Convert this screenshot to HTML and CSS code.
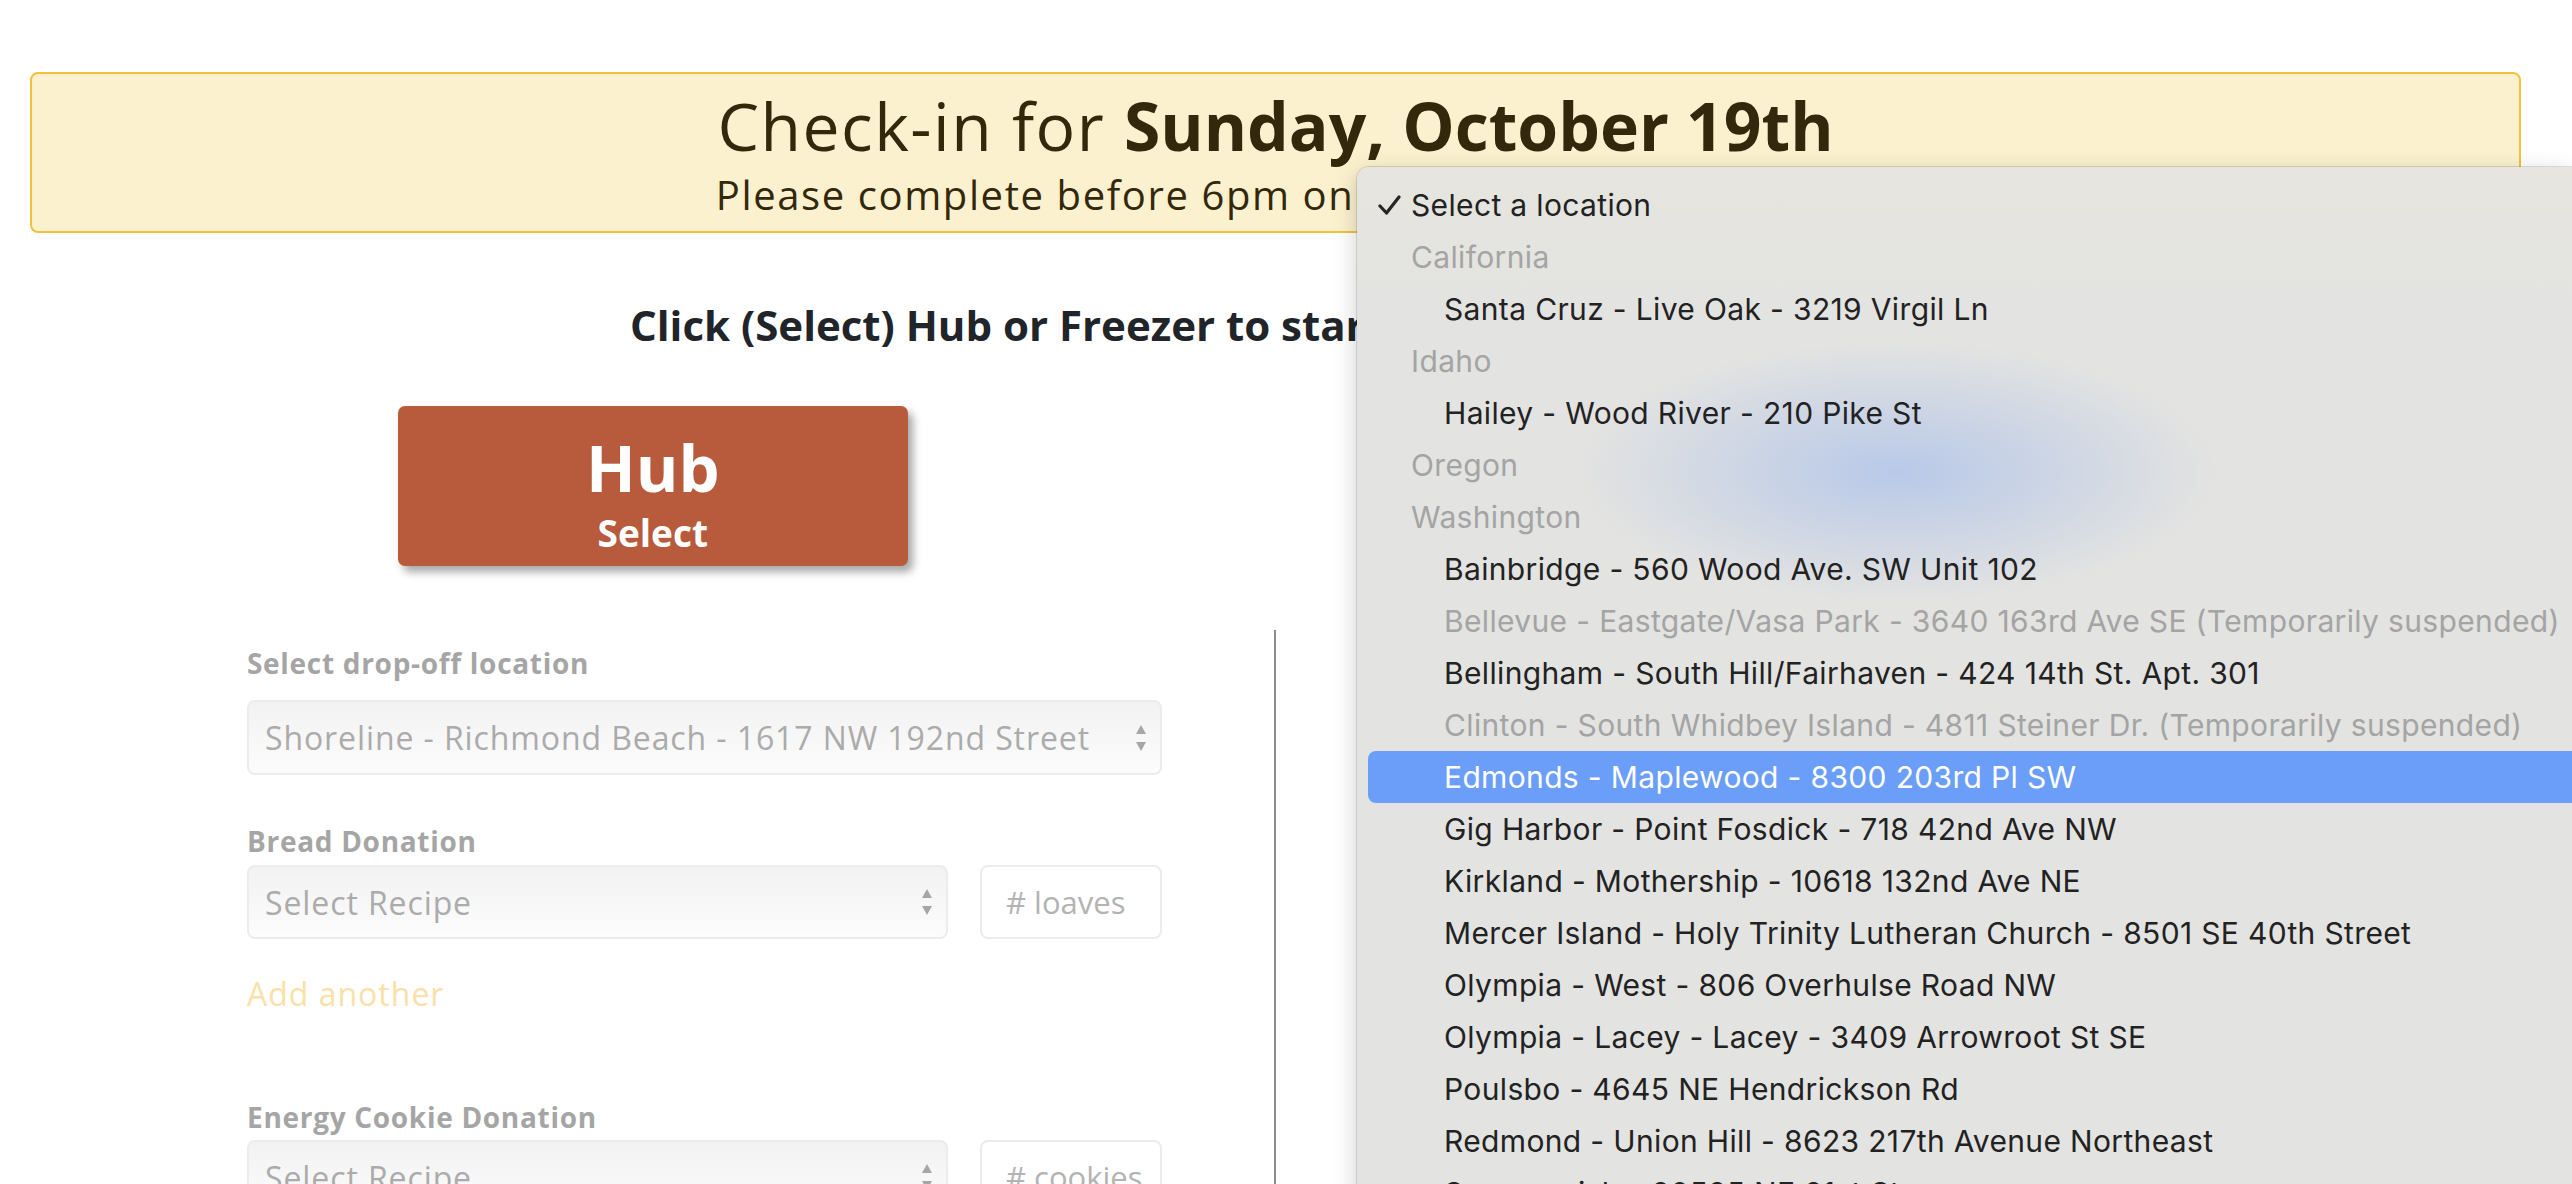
FILE: index.html
```html
<!DOCTYPE html>
<html lang="en">
<head>
    <meta charset="UTF-8">
    <meta name="viewport" content="width=device-width, initial-scale=1.0">
    <title>Check-in</title>
    <link rel="stylesheet" href="styles.css">
</head>
<body>

<div class="page">
  <div class="banner">
    <h1>Check-in for <strong>Sunday, October 19th</strong></h1>
    <p>Please complete before 6pm on Saturday, October 18th</p>
  </div>

  <h2 class="start-title">Click (Select) Hub or Freezer to start</h2>

  <div class="type-row">
    <div class="type-col">
      <button class="type-btn">
        <span class="type-name">Hub</span>
        <span class="type-action">Select</span>
      </button>
    </div>
    <div class="type-col"></div>
  </div>

  <div class="form-row">
    <div class="form-col">
      <label class="field-label">Select drop-off location</label>
      <div class="select-box">
        <span>Shoreline - Richmond Beach - 1617 NW 192nd Street</span>
        <svg class="arrows" width="10" height="28" viewBox="0 0 10 28"><polygon points="0,10 5,1 10,10"/><polygon points="0,18 5,27 10,18"/></svg>
      </div>

      <label class="field-label gap-top">Bread Donation</label>
      <div class="donation-row">
        <div class="select-box recipe">
          <span>Select Recipe</span>
          <svg class="arrows" width="10" height="28" viewBox="0 0 10 28"><polygon points="0,10 5,1 10,10"/><polygon points="0,18 5,27 10,18"/></svg>
        </div>
        <div class="count-box">#&nbsp;loaves</div>
      </div>
      <a class="add-link">Add another</a>

      <label class="field-label gap-big">Energy Cookie Donation</label>
      <div class="donation-row">
        <div class="select-box recipe">
          <span>Select Recipe</span>
          <svg class="arrows" width="10" height="28" viewBox="0 0 10 28"><polygon points="0,10 5,1 10,10"/><polygon points="0,18 5,27 10,18"/></svg>
        </div>
        <div class="count-box">#&nbsp;cookies</div>
      </div>
    </div>
    <div class="form-col right"></div>
  </div>
</div>

<!-- native select popup, open over the page -->
<div class="menu">
  <div class="menu-item checked">
    <svg class="check" width="23" height="20" viewBox="0 0 23 20"><polyline points="2,11 8.5,18 21,2"/></svg>
    Select a location
  </div>
  <div class="menu-group">California</div>
  <div class="menu-item">Santa Cruz - Live Oak - 3219 Virgil Ln</div>
  <div class="menu-group">Idaho</div>
  <div class="menu-item">Hailey - Wood River - 210 Pike St</div>
  <div class="menu-group">Oregon</div>
  <div class="menu-group">Washington</div>
  <div class="menu-item">Bainbridge - 560 Wood Ave. SW Unit 102</div>
  <div class="menu-item disabled">Bellevue - Eastgate/Vasa Park - 3640 163rd Ave SE (Temporarily suspended)</div>
  <div class="menu-item">Bellingham - South Hill/Fairhaven - 424 14th St. Apt. 301</div>
  <div class="menu-item disabled">Clinton - South Whidbey Island - 4811 Steiner Dr. (Temporarily suspended)</div>
  <div class="menu-item active">Edmonds - Maplewood - 8300 203rd Pl SW</div>
  <div class="menu-item">Gig Harbor - Point Fosdick - 718 42nd Ave NW</div>
  <div class="menu-item">Kirkland - Mothership - 10618 132nd Ave NE</div>
  <div class="menu-item">Mercer Island - Holy Trinity Lutheran Church - 8501 SE 40th Street</div>
  <div class="menu-item">Olympia - West - 806 Overhulse Road NW</div>
  <div class="menu-item">Olympia - Lacey - Lacey - 3409 Arrowroot St SE</div>
  <div class="menu-item">Poulsbo - 4645 NE Hendrickson Rd</div>
  <div class="menu-item">Redmond - Union Hill - 8623 217th Avenue Northeast</div>
  <div class="menu-item">Sammamish - 20525 NE 21st St</div>
</div>

</body>
</html>
```

FILE: styles.css
```css
body {
    margin: 0;
    font-family: "Open Sans", Arial, sans-serif;
    background: #fff;
    overflow: hidden;
    height: 1184px;
}
.page {
    width: 2491px;
    padding-top: 72px;
    margin-left: 30px;
}
.banner {
    box-sizing: border-box;
    height: 161px;
    border: 2px solid #f2c13c;
    border-radius: 8px;
    background: #fcf1cf;
    color: #33280c;
    text-align: center;
    padding-top: 11px;
}
.banner h1 {
    margin: 0;
    font-size: 66px;
    font-weight: 400;
    line-height: 80px;
    letter-spacing: 1.5px;
}
.banner h1 strong {
    font-weight: 700;
    letter-spacing: 0;
}
.banner p {
    margin: 6px 0 0;
    font-size: 40px;
    line-height: 48px;
    letter-spacing: 1.6px;
}
.start-title {
    margin: 67px 0 0;
    padding-left: 600px;
    font-size: 42px;
    line-height: 50px;
    font-weight: 700;
    color: #212529;
    white-space: nowrap;
}
.type-row {
    display: flex;
    margin-top: 56px;
}
.type-col {
    flex: 1;
    display: flex;
    justify-content: center;
}
.type-btn {
    box-sizing: border-box;
    width: 510px;
    height: 160px;
    border: none;
    border-radius: 7px;
    background: #b85a3c;
    color: #fff;
    font-family: inherit;
    display: flex;
    flex-direction: column;
    align-items: center;
    padding: 26px 0 0;
    box-shadow: 5px 6px 8px rgba(0, 0, 0, 0.35);
}
.type-name {
    font-size: 65px;
    line-height: 70px;
    font-weight: 700;
}
.type-action {
    margin-top: 9px;
    font-size: 37px;
    line-height: 44px;
    font-weight: 700;
}
.form-row {
    display: flex;
    margin-top: 64px;
    height: 700px;
}
.form-col {
    box-sizing: border-box;
    width: 1246px;
    padding: 16px 112px 0 217px;
    border-right: 2px solid #8c8c8c;
}
.form-col.right {
    flex: 1;
    border-right: none;
}
.field-label {
    display: block;
    font-size: 28px;
    line-height: 34px;
    font-weight: 700;
    letter-spacing: 0.7px;
    color: #a5a5a5;
    margin-bottom: 20px;
}
.field-label.gap-top {
    margin-top: 49px;
    margin-bottom: 7px;
}
.field-label.gap-big {
    margin-top: 86px;
    margin-bottom: 6px;
}
.select-box {
    box-sizing: border-box;
    height: 75px;
    display: flex;
    align-items: center;
    justify-content: space-between;
    padding: 0 14px 0 16px;
    border: 2px solid #ececec;
    border-radius: 8px;
    background: linear-gradient(#f2f2f2, #fcfcfc);
    font-size: 32px;
    color: #ababab;
    letter-spacing: 0.9px;
}
.arrows polygon {
    fill: #a6a6a6;
}
.donation-row {
    display: flex;
    gap: 32px;
}
.select-box.recipe {
    flex: 1;
    height: 74px;
}
.count-box {
    box-sizing: border-box;
    width: 182px;
    height: 74px;
    display: flex;
    align-items: center;
    padding-left: 24px;
    border: 2px solid #ececec;
    border-radius: 8px;
    background: #fff;
    font-size: 31px;
    color: #b3b3b3;
    white-space: nowrap;
    overflow: hidden;
}
.add-link {
    display: block;
    margin-top: 35px;
    font-size: 32px;
    line-height: 40px;
    letter-spacing: 1px;
    color: #fae0a9;
}

/* popup menu */
.menu {
    position: absolute;
    left: 1357px;
    top: 167px;
    right: 0;
    height: 1100px;
    padding-top: 12px;
    border-top-left-radius: 12px;
    background:
        radial-gradient(ellipse 320px 130px at 540px 305px, rgba(170, 192, 235, 0.75), rgba(170, 192, 235, 0)),
        linear-gradient(#e6e5df, #e3e3e1 140px);
    box-shadow: -3px 4px 22px rgba(0, 0, 0, 0.16), 0 0 0 1px rgba(0, 0, 0, 0.12);
    font-family: Inter, "Noto Sans", sans-serif;
    font-size: 30px;
    letter-spacing: 0.35px;
    color: #222;
}
.menu-item,
.menu-group {
    height: 52px;
    display: flex;
    align-items: center;
    margin-left: 11px;
    padding-left: 76px;
    white-space: nowrap;
    border-radius: 8px 0 0 8px;
}
.menu-group {
    padding-left: 43px;
    color: #a4a4a4;
}
.menu-item.checked {
    padding-left: 10px;
}
.check {
    margin-right: 10px;
}
.check polyline {
    fill: none;
    stroke: #262626;
    stroke-width: 3.2;
    stroke-linecap: round;
    stroke-linejoin: round;
}
.menu-item.disabled {
    color: #a4a4a4;
}
.menu-item.active {
    background: #6a9ef8;
    color: #fff;
}
```
